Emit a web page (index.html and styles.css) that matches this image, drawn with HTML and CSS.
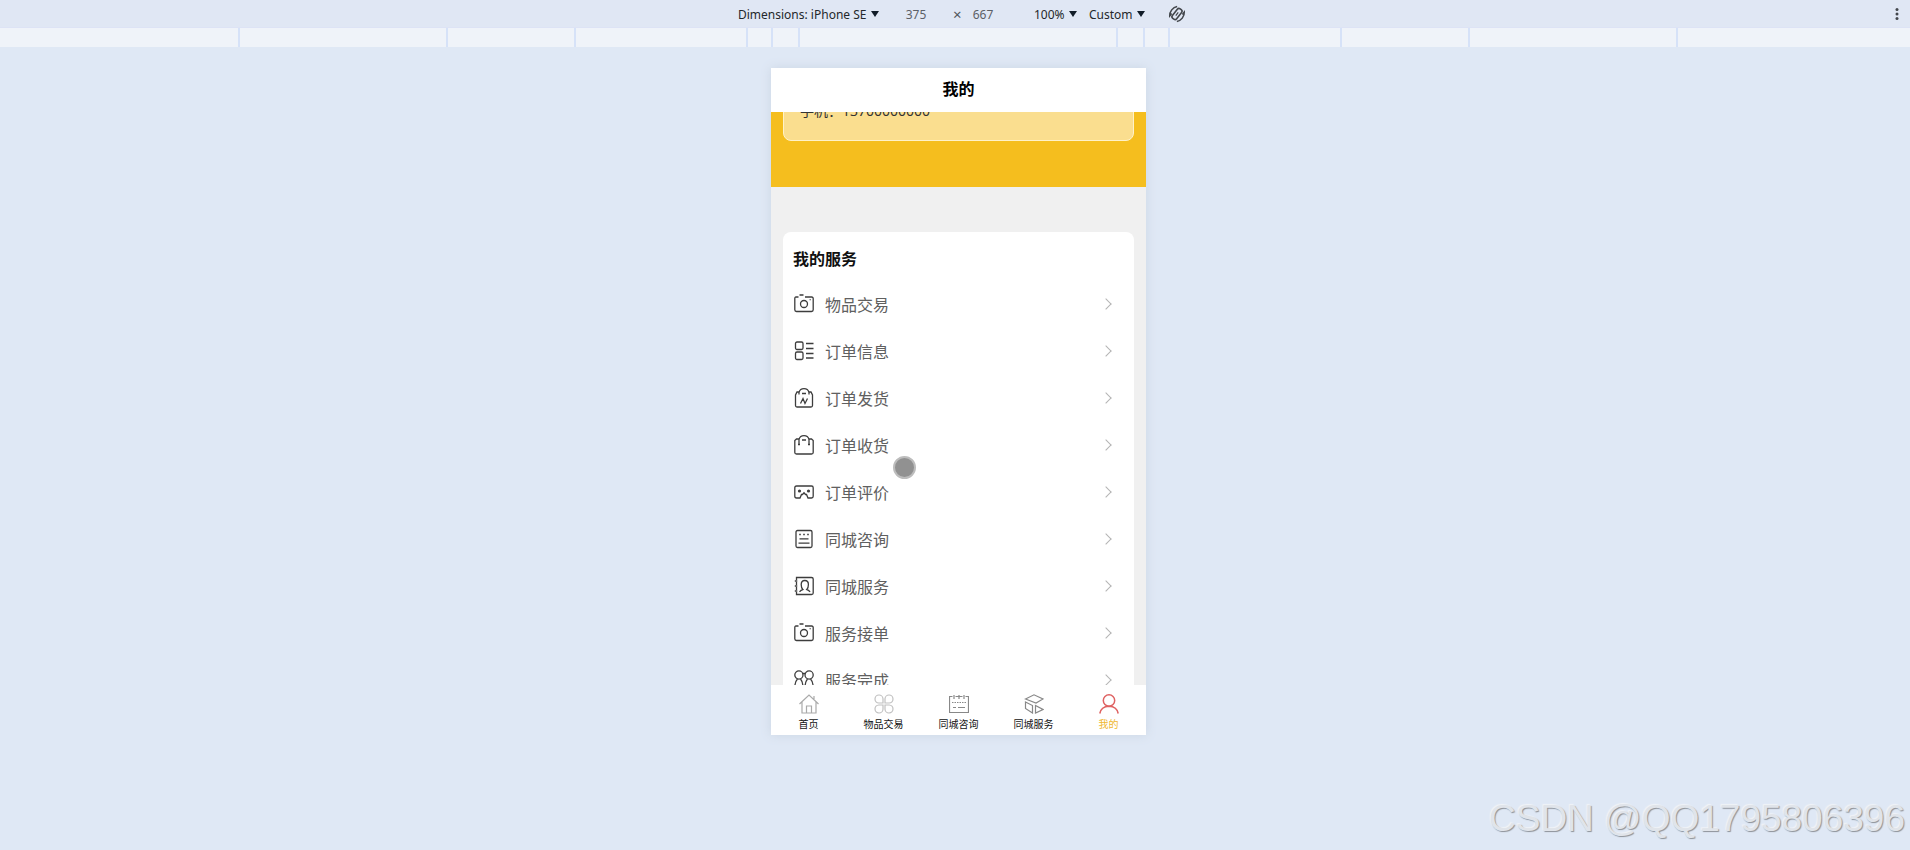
FILE: index.html
```html
<!DOCTYPE html>
<html lang="zh-CN">
<head>
<meta charset="utf-8">
<meta name="viewport" content="width=device-width, initial-scale=1">
<title>我的</title>
<link rel="stylesheet" href="styles.css">
</head>
<body>
<header class="toolbar">
  <label class="picker picker-device"><select aria-label="Dimensions"><option>Dimensions: iPhone SE</option></select></label>
  <input class="size" type="text" value="375" aria-label="Width">
  <span class="times">×</span>
  <input class="size" type="text" value="667" aria-label="Height">
  <label class="picker picker-zoom"><select aria-label="Zoom"><option>100%</option></select></label>
  <label class="picker picker-throttle"><select aria-label="Throttling"><option>Custom</option></select></label>
  <button class="tool rotate" type="button" aria-label="Rotate">
    <svg width="18" height="18" viewBox="0 0 18 18" fill="none" stroke="currentColor" stroke-width="1.600"><g transform="rotate(38 9 9)"><rect x="6.300" y="3" width="5.400" height="12" rx="2"/><path d="M9 7v4" stroke-width="1.200"/><path d="M4.500 3Q2.300 5.500 2.300 9t2.200 6V12M13.500 15Q15.700 12.500 15.700 9T13.500 3V6"/></g></svg>
  </button>
  <button class="tool more" type="button" aria-label="More options">
    <svg width="4" height="14" viewBox="0 0 4 14" fill="currentColor"><circle cx="2" cy="2.500" r="1.500"/><circle cx="2" cy="7" r="1.500"/><circle cx="2" cy="11.500" r="1.500"/></svg>
  </button>
</header>
<div class="ruler">
  <i class="edge"></i><i class="laptop-l"></i><i class="laptop"></i><i class="tablet"></i><i class="mobile-l"></i><i class="mobile-m"></i><i class="mobile-s"></i><i class="mobile-m"></i><i class="mobile-l"></i><i class="tablet"></i><i class="laptop"></i><i class="laptop-l"></i><i class="edge"></i>
</div>
<div class="stage">
  <div class="phone">
    <h1 class="title">我的</h1>
    <main class="page">
      <section class="profile"><p class="profile-card">手机：13700000000</p></section>
      <section class="services">
        <h2>我的服务</h2>
        <a class="row" href="#goods"><svg class="icon" viewBox="0 0 20 20"><path d="M4.500 3H2Q.8 3 .8 4.500v11.200Q.8 17.500 2.500 17.500h15q1.700 0 1.700-1.800V4.500Q19.200 3 17.700 3H11M5.500 1h4"/><circle cx="10" cy="10" r="3.500"/><path d="M16.200 5.200v1"/></svg><span>物品交易</span></a>
        <a class="row" href="#orders"><svg class="icon" viewBox="0 0 20 20"><rect x="1.500" y="1" width="7.500" height="7.500" rx="1.500"/><rect x="1.500" y="11" width="7.500" height="7.500" rx="1.500"/><path d="M12 2.500h7.500M12 7.500h7.500M12 12.500h7.500M12 17h7.500"/></svg><span>订单信息</span></a>
        <a class="row" href="#ship"><svg class="icon" viewBox="0 0 20 20"><path d="M5 6.500V4.500Q6 .7 10 .7t5 3.800v2M5 4H3L1.500 7v10.500q0 1.500 1.500 1.500h14q1.500 0 1.500-1.500V7L17 4h-2M8 5.500h4M6.500 15.500l2.500-5 2 5 2.500-5"/></svg><span>订单发货</span></a>
        <a class="row" href="#receive"><svg class="icon" viewBox="0 0 20 20"><path d="M5 9.500V4.500Q6 .7 10 .7t5 3.800v5M4 9.500h2M14 9.500h2M5 4H2.500L.8 5.500v12q0 1.500 1.700 1.500h15q1.700 0 1.700-1.500v-12L17.500 4H15M8 5h4"/></svg><span>订单收货</span></a>
        <a class="row" href="#reviews"><svg class="icon" viewBox="0 0 20 20"><path d="M2.500 4h15q1.700 0 1.700 1.700v8.600q0 1.700-1.700 1.700H14l-1.500-3.500h-1L10 10.800l-1.500 1.700h-1L6 16H2.500Q.8 16 .8 14.300V5.700Q.8 4 2.500 4z"/><g class="solid"><circle cx="5.500" cy="9" r="1.600"/><circle cx="14.500" cy="9" r="1.600"/></g></svg><span>订单评价</span></a>
        <a class="row" href="#consult"><svg class="icon" viewBox="0 0 20 20"><rect x="2" y="1.500" width="16" height="17" rx="1.500"/><path d="M5.500 9.800h9M4.500 14.200h11M5.200 5.500h1.600M9.200 5.500h1.600M13.200 5.500h1.600"/></svg><span>同城咨询</span></a>
        <a class="row" href="#local"><svg class="icon" viewBox="0 0 20 20"><path d="M2.500 4V1.500h15q1.700 0 1.700 1.500v14q0 1.500-1.700 1.500h-15V16M2.500 6v3M2.500 11v3M.8 5h2.500M.8 10h2.500M.8 15h2.500"/><path d="M5.500 15.800q1.500-1.800 3.300-2.300Q7.200 12 7.200 8.500q0-4 3.600-4t3.600 4q0 3.500-1.600 5 1.800.5 3.300 2.300"/></svg><span>同城服务</span></a>
        <a class="row" href="#accept"><svg class="icon" viewBox="0 0 20 20"><path d="M4.500 3H2Q.8 3 .8 4.500v11.200Q.8 17.500 2.500 17.500h15q1.700 0 1.700-1.800V4.500Q19.200 3 17.700 3H11M5.500 1h4"/><circle cx="10" cy="10" r="3.500"/><path d="M16.200 5.200v1"/></svg><span>服务接单</span></a>
        <a class="row" href="#done"><svg class="icon" viewBox="0 0 20 20"><circle cx="4.900" cy="5" r="4.100"/><circle cx="15.100" cy="5" r="4.100"/><path d="M8.500 3.500h3M3.500 9Q1 11.500 .8 17M6.500 9q2.300 2.500 2.500 8M13.500 9q-2.300 2.500-2.500 8M16.500 9q2.500 2.500 2.700 8"/></svg><span>服务完成</span></a>
      </section>
    </main>
    <nav class="tabs">
      <a class="tab pale" href="#home"><svg class="icon" viewBox="0 0 20 20"><path d="M.5 10L10 1l9.500 9M3 8v11h14V8M7.500 19v-7h5v7M15 5V2"/></svg><span>首页</span></a>
      <a class="tab paler" href="#goods"><svg class="icon" viewBox="0 0 20 20"><path d="M9 9H4.800A4 4 0 1 1 9 4.800zM11 9V4.800A4 4 0 1 1 15.200 9zM9 11v4.200A4 4 0 1 1 4.800 11zM11 11h4.200A4 4 0 1 1 11 15.200z"/></svg><span>物品交易</span></a>
      <a class="tab" href="#consult"><svg class="icon" viewBox="0 0 20 20"><path d="M3.500 2.500h-3v16h19v-16h-3M6.500 2.500h7M5 1v4M10 1v4M15 1v4M4 13.500h3M9 13.500h7"/><path d="M3 8.500h14" stroke-dasharray="1.500 1"/></svg><span>同城咨询</span></a>
      <a class="tab" href="#local"><svg class="icon" viewBox="0 0 20 20"><path d="M1.500 5L10 .8 19 5l-7 4zM1.500 8l7 3.500v7.500l-7-4.500zM11.500 11.500v7.500l7.500-3.500z"/></svg><span>同城服务</span></a>
      <a class="tab active" href="#me"><svg class="icon" viewBox="0 0 20 20"><circle cx="10" cy="6.500" r="5.700"/><path d="M.8 19.500Q2 12.500 10 12.200q8 .3 9.200 7.300"/></svg><span>我的</span></a>
    </nav>
    <div class="touch"></div>
  </div>
</div>
<div class="watermark">CSDN @QQ1795806396</div>
</body>
</html>
```
FILE: styles.css
```css
* { box-sizing: border-box; }
body {
  margin: 0;
  min-height: 100vh;
  background: #dfe8f5;
  font-family: "Noto Sans", "Noto Sans CJK SC", sans-serif;
  overflow: hidden;
}
a { color: inherit; text-decoration: none; }
h1, h2, p { margin: 0; }

.toolbar {
  position: relative;
  display: flex;
  align-items: center;
  justify-content: center;
  height: 28px;
  padding: 1px 0 0 14px;
  background: #e0e7f4;
  border-bottom: 1px solid #dde3f5;
  color: #24272b;
  font-size: 12px;
}
.picker { display: flex; align-items: center; }
.picker::after {
  content: "";
  border: 4px solid transparent;
  border-top: 6px solid #111c28;
  border-bottom: 0;
}
.picker select {
  appearance: none;
  width: 100%;
  padding: 0;
  border: 0;
  background: none;
  color: inherit;
  font: inherit;
}
.picker-device { width: 141px; }
.picker-zoom { width: 43px; }
.picker-throttle { width: 56px; margin-left: 12px; }
.size {
  width: 48px;
  padding: 0;
  border: 0;
  background: none;
  color: #5c6066;
  font: inherit;
  text-align: center;
}
.picker-device + .size { margin-left: 13px; }
.times {
  width: 10px;
  margin: 0 -4px 0 13px;
  color: #50555b;
  font-size: 15px;
  line-height: 16px;
}
.size + .picker-zoom { margin-left: 27px; }
.tool {
  display: flex;
  padding: 0;
  border: 0;
  background: none;
  color: #43474c;
}
.rotate { margin-left: 23px; }
.more { position: absolute; right: 11px; top: 7px; }

.ruler {
  display: flex;
  height: 19px;
  padding-left: 6px;
  background: #eff3f9;
}
.ruler i { flex: none; border-right: 2px solid #d6e2f8; }
.ruler .edge { flex: 1; }
.ruler .edge:last-child { border: 0; }
.laptop-l { width: 208px; }
.laptop { width: 128px; }
.tablet { width: 172px; }
.mobile-l { width: 25px; }
.mobile-m { width: 27px; }
.mobile-s { width: 318px; }

.stage {
  display: flex;
  justify-content: center;
  padding: 21px 0 21px 7px;
}
.phone {
  position: relative;
  display: flex;
  flex-direction: column;
  width: 375px;
  height: 667px;
  background: #f0f0f0;
  box-shadow: 0 0 10px #cbd5e3;
}
.title {
  height: 44px;
  background: #fff;
  color: #000;
  font-size: 16px;
  line-height: 42px;
  text-align: center;
}
.page { flex: 1; min-height: 0; overflow: hidden; }
.profile {
  display: flex;
  align-items: flex-end;
  height: 75px;
  padding: 0 12px 46px;
  background: #f5be1e;
  overflow: hidden;
}
.profile-card {
  flex: 1;
  padding: 10px 16px 17px;
  border: 1px solid #fff2c8;
  border-radius: 8px;
  background: #fade8f;
  color: #333;
  font-size: 14px;
  line-height: 24px;
}
.services {
  margin: 45px 12px 0;
  padding: 5px 10px;
  border-radius: 8px;
  background: #fff;
}
.services h2 { color: #111; font-size: 16px; line-height: 44px; }
.row {
  display: flex;
  align-items: center;
  gap: 11px;
  height: 47px;
  padding: 0 14px 0 1px;
  color: #606060;
  font-size: 16px;
  line-height: 24px;
}
.row::after {
  content: "";
  width: 7px;
  height: 7px;
  margin: 0 0 1px auto;
  border: solid #b4b4b4;
  border-width: 1px 1px 0 0;
  transform: rotate(45deg);
}
.icon {
  width: 20px;
  height: 20px;
  fill: none;
  stroke: currentColor;
  stroke-width: 1.3;
}
.row .icon { margin-bottom: 2px; color: #3d3d3d; }
.icon .solid { fill: currentColor; stroke: none; }

.tabs { display: flex; height: 50px; background: #fff; }
.tab {
  flex: 1;
  display: flex;
  flex-direction: column;
  align-items: center;
  padding-top: 9px;
  color: #111;
  font-size: 10px;
  line-height: 20px;
}
.tab .icon { color: #888; stroke-width: 1.2; }
.pale .icon { color: #aaa; }
.paler .icon { color: #c0c0c0; }
.tab.active { color: #efb72f; }
.active .icon { color: #df6262; stroke-width: 1.5; }

.touch {
  position: absolute;
  left: 122px;
  top: 388px;
  width: 23px;
  height: 23px;
  border: 2px solid #bdbdbd;
  border-radius: 50%;
  background: #919191;
}
.watermark {
  position: absolute;
  right: 5px;
  bottom: 10px;
  color: #e0e4ea;
  font: 37px/42px "Liberation Sans", Arial, sans-serif;
  text-shadow: 1px 1px 1px #8d9299, -1px -1px 1px #f0f3f7;
}
```
